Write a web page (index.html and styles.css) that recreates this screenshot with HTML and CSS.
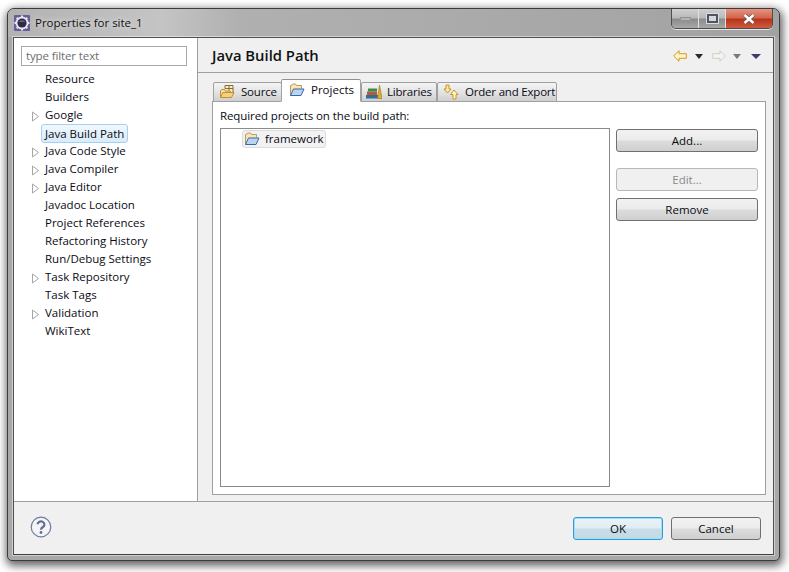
FILE: index.html
```html
<!DOCTYPE html>
<html lang="en">
<head>
<meta charset="utf-8">
<title>Properties for site_1</title>
<link rel="stylesheet" href="styles.css">
</head>
<body>
<svg class="defs" width="0" height="0" aria-hidden="true">
  <symbol id="folder" viewBox="0 0 16 16">
    <path d="M1.500 13.500V3.500h1l1-1.500h3l1 1.500h5v3" fill="#f8e4b4" stroke="#b89a5c"/>
    <path d="M1.500 13.500l3-6.500h10.500l-3 6.500z" fill="#bcd4f0" stroke="#3a68b0"/>
  </symbol>
  <symbol id="tri" viewBox="0 0 9 11">
    <path d="M1.500 1v9l6-4.500z" fill="#fff" stroke="#a6a6a6"/>
  </symbol>
</svg>
<main class="window">
  <header class="titlebar">
    <svg class="app-icon" viewBox="0 0 16 16" aria-hidden="true">
      <rect width="16" height="16" rx="1" fill="#6a5c96"/>
      <circle cx="8" cy="8" r="6.500" fill="#e8e6ee"/>
      <path d="M8 .5v15M.5 8h15M2.700 2.700l10.600 10.600M13.300 2.700L2.700 13.300" stroke="#e8e6ee" stroke-width="2"/>
      <circle cx="8" cy="8" r="4.600" fill="#2e2a4c"/>
      <path d="M4.500 7a3.800 3 0 0 1 7 0z" fill="#6a6690"/>
    </svg>
    <span class="window-title">Properties for site_1</span>
    <div class="controls">
      <div class="ctl ctl-min"><i class="min-glyph"></i></div>
      <div class="ctl ctl-max"><i class="max-glyph"></i></div>
      <div class="ctl ctl-close">
        <svg width="12" height="10" viewBox="0 0 12 10" aria-hidden="true"><path d="M1.500 1l9 8M10.500 1l-9 8" stroke="#5a5a5a" stroke-width="3.800"/><path d="M1.500 1l9 8M10.500 1l-9 8" stroke="#fff" stroke-width="2.400"/></svg>
      </div>
    </div>
  </header>
  <div class="client">
    <div class="body">
      <nav class="sidebar">
        <input class="filter" type="text" placeholder="type filter text">
        <ul class="tree">
          <li class="node">Resource</li>
          <li class="node">Builders</li>
          <li class="node has-kids"><svg class="twisty"><use href="#tri"/></svg>Google</li>
          <li class="node selected"><span class="sel">Java Build Path</span></li>
          <li class="node has-kids"><svg class="twisty"><use href="#tri"/></svg>Java Code Style</li>
          <li class="node has-kids"><svg class="twisty"><use href="#tri"/></svg>Java Compiler</li>
          <li class="node has-kids"><svg class="twisty"><use href="#tri"/></svg>Java Editor</li>
          <li class="node">Javadoc Location</li>
          <li class="node">Project References</li>
          <li class="node">Refactoring History</li>
          <li class="node">Run/Debug Settings</li>
          <li class="node has-kids"><svg class="twisty"><use href="#tri"/></svg>Task Repository</li>
          <li class="node">Task Tags</li>
          <li class="node has-kids"><svg class="twisty"><use href="#tri"/></svg>Validation</li>
          <li class="node">WikiText</li>
        </ul>
      </nav>
      <section class="page">
        <div class="page-head">
          <h1 class="page-title">Java Build Path</h1>
          <div class="history">
            <svg class="arrow" viewBox="0 0 14 12" aria-hidden="true"><path d="M.7 6L6 .7v3h7.300v4.600H6v3z" fill="#fff4c8" stroke="#d29a1e"/></svg>
            <i class="drop drop-a"></i>
            <svg class="arrow arrow-fwd" viewBox="0 0 14 12" aria-hidden="true"><path d="M13.300 6L8 .7v3H.7v4.600H8v3z" fill="#f4f4f0" stroke="#cfcfc8"/></svg>
            <i class="drop drop-b"></i>
            <i class="drop drop-c"></i>
          </div>
        </div>
        <div class="page-body">
          <div class="tabs">
            <div class="tab tab-source">
              <svg class="tab-icon" viewBox="0 0 16 16" aria-hidden="true">
                <path d="M6 4.500V1.500h8v8h-3" fill="#fbeecb" stroke="#8a6a30"/>
                <path d="M10 1.500v8M6 4.500h8" fill="none" stroke="#8a6a30"/>
                <path d="M1.500 13.500V6.500l1-1h3l1 1.500h5v1" fill="#f8dc9c" stroke="#c09030"/>
                <path d="M1.500 13.500l2.500-5h11l-2.500 5z" fill="#f6d184" stroke="#c09030"/>
              </svg>Source</div>
            <div class="tab tab-active">
              <svg class="tab-icon" aria-hidden="true"><use href="#folder"/></svg>Projects</div>
            <div class="tab tab-libs">
              <svg class="tab-icon" viewBox="0 0 16 16" aria-hidden="true">
                <rect x="0" y="11" width="12" height="3.500" fill="#2e6e9a"/>
                <rect x="1" y="7.500" width="10" height="3.500" fill="#b85a3a"/>
                <rect x="2" y="4.500" width="9" height="3" fill="#3c8a4e"/>
                <path d="M11.500 14.500L13.500 1l2.500 13.500z" fill="#e2ae2c" stroke="#9c7414" stroke-width=".6"/>
              </svg>Libraries</div>
            <div class="tab tab-order">
              <svg class="tab-icon" viewBox="0 0 16 16" aria-hidden="true">
                <path d="M3 1h3v4h2L4.500 9 1 5h2z" fill="#fbe9b0" stroke="#c8941e"/>
                <path d="M11 6l4 4.500h-2v4.500h-3v-4.500H7.500z" fill="#fff6d4" stroke="#c8941e"/>
              </svg>Order and Export</div>
          </div>
          <div class="panel">
            <p class="panel-label">Required projects on the build path:</p>
            <div class="panel-row">
              <div class="list">
                <div class="list-item">
                  <svg class="tab-icon" aria-hidden="true"><use href="#folder"/></svg>framework
                </div>
              </div>
              <div class="actions">
                <button class="btn btn-add" type="button">Add...</button>
                <button class="btn btn-disabled" type="button" disabled>Edit...</button>
                <button class="btn btn-remove" type="button">Remove</button>
              </div>
            </div>
          </div>
        </div>
      </section>
    </div>
    <footer class="footer">
      <svg class="help" viewBox="0 0 22 22" aria-hidden="true">
        <circle cx="11" cy="11" r="9.800" fill="#f4f4f6" stroke="#6d7c9c" stroke-width="1.200"/>
        <path d="M7.600 8.300a3.400 3 0 1 1 5.200 2.700c-1.200.8-1.800 1.300-1.800 2.700" fill="none" stroke="#5f6f92" stroke-width="2.200"/>
        <circle cx="11" cy="16.500" r="1.400" fill="#5f6f92"/>
      </svg>
      <div class="footer-actions">
        <button class="btn btn-default" type="button">OK</button>
        <button class="btn btn-cancel" type="button">Cancel</button>
      </div>
    </footer>
  </div>
</main>
</body>
</html>
```
FILE: styles.css
```css
* { box-sizing: border-box; }
html, body { margin: 0; padding: 0; background: #fff; }
body {
  width: 789px;
  height: 572px;
  padding: 8px 9px 11px 7px;
  overflow: hidden;
  font: 11.5px/18px "Open Sans", "Noto Sans", sans-serif;
  color: #0a0a14;
}
.defs { position: absolute; }

.window {
  height: 553px;
  display: flex;
  flex-direction: column;
  padding: 0 5px 5px;
  border: 1px solid #3c3c3c;
  border-radius: 7px 7px 5px 5px;
  background: #a8a8a8;
  box-shadow: 1px 3px 8px 2px rgba(0, 0, 0, .6);
}

.titlebar {
  height: 28px;
  flex: none;
  display: flex;
  align-items: flex-start;
  padding-top: 6px;
  padding-left: 6px;
  margin: 0 -5px;
  background: linear-gradient(90deg, #b2b2b2 0, #c4c4c4 20%, #b0b0b0 30%, #a2a2a2 100%);
  border-radius: 6px 6px 0 0;
}
.app-icon { width: 16px; height: 16px; flex: none; }
.window-title { margin-left: 5px; line-height: 16px; color: #111; text-shadow: 0 0 6px #fff; }

.controls {
  margin-left: auto;
  margin-top: -6px;
  margin-right: 6px;
  display: flex;
  height: 20px;
  border: 1px solid #4e4e4e;
  border-top: 0;
  border-radius: 0 0 5px 5px;
  overflow: hidden;
  box-shadow: 0 1px 0 rgba(255, 255, 255, .7);
}
.ctl {
  display: flex;
  align-items: center;
  justify-content: center;
  border-right: 1px solid #e0e0e0;
  background: linear-gradient(to bottom, #cfcfcf 0, #bababa 45%, #8c8c8c 55%, #a8a8a8 100%);
}
.ctl-min { width: 27px; }
.ctl-max { width: 27px; }
.ctl-close {
  width: 46px;
  border-right: 0;
  background: linear-gradient(to bottom, #e49484 0, #d4664f 45%, #b8351a 55%, #cc5a40 100%);
}
.min-glyph { width: 11px; height: 4px; background: #b0b3b8; border: 1px solid #8f9296; }
.max-glyph { width: 11px; height: 9px; border: 2px solid #4e5666; background: #d6d8dc; box-shadow: 0 0 0 1px #dcdcdc; }

.client {
  flex: 1;
  min-height: 0;
  display: flex;
  flex-direction: column;
  border: 1px solid #505050;
  border-bottom-color: #404040;
  background: #f0f0f0;
  box-shadow: 0 0 0 1px rgba(255, 255, 255, .45);
}

.body { flex: 1; min-height: 0; display: flex; border-bottom: 1px solid #a0a0a0; }

.sidebar {
  width: 184px;
  flex: none;
  padding: 8px 0 0 7px;
  background: #fff;
  border-right: 1px solid #a0a0a0;
}
.filter {
  display: block;
  width: 166px;
  height: 20px;
  padding: 0 4px 2px;
  border: 1px solid #a8a8a8;
  font: inherit;
  letter-spacing: -.12px;
  line-height: 16px;
  outline: 0;
}
.filter::placeholder { color: #6e6e6e; opacity: 1; }

.tree { list-style: none; margin: 4px 0 0; padding: 0 0 0 24px; }
.node { position: relative; height: 18px; line-height: 18px; white-space: nowrap; }
.twisty { position: absolute; left: -14px; top: 5px; width: 9px; height: 11px; }
.sel {
  display: inline-block;
  height: 19px;
  margin-left: -4px;
  padding: 0 3px;
  line-height: 17px;
  border: 1px solid #a8d0ee;
  border-radius: 3px;
  background: linear-gradient(to bottom, #f0f8fe, #d8ecfa);
}

.page { flex: 1; min-width: 0; display: flex; flex-direction: column; }
.page-head {
  height: 35px;
  flex: none;
  display: flex;
  align-items: center;
  padding: 0 12px 0 14px;
  border-bottom: 1px solid #a0a0a0;
}
.page-title { margin: 0; font-size: 14.8px; font-weight: 600; line-height: 20px; color: #111; }
.history { margin-left: auto; margin-top: 2px; display: flex; align-items: center; }
.arrow { width: 14px; height: 12px; display: block; }
.arrow-fwd { margin-left: 9px; }
.drop { width: 0; height: 0; border: 4px solid transparent; border-bottom: 0; border-top-width: 5px; }
.drop-a { margin-left: 8px; border-top-color: #2a2a2a; }
.drop-b { margin-left: 7px; border-top-color: #7a7a7a; }
.drop-c { margin-left: 10px; border-left-width: 5px; border-right-width: 5px; border-top-color: #3c3a70; }

.page-body {
  flex: 1;
  min-height: 0;
  display: flex;
  flex-direction: column;
  padding: 7px 7px 6px 14px;
}

.tabs { display: flex; flex: none; align-items: flex-end; height: 22px; margin-bottom: -1px; padding-left: 1px; position: relative; z-index: 1; }
.tab {
  display: flex;
  align-items: center;
  height: 20px;
  padding-left: 5px;
  border: 1px solid #a0a0a0;
  border-radius: 2px 2px 0 0;
  background: linear-gradient(to bottom, #f4f4f4 0, #e4e4e4 50%, #cfcfcf 100%);
  white-space: nowrap;
  letter-spacing: -.2px;
}
.tab-source { width: 69px; padding-left: 5px; }
.tab-libs { width: 76px; padding-left: 4px; }
.tab-libs .tab-icon { margin-right: 5px; }
.tab-order { width: 120px; }
.tab-active {
  width: 80px;
  height: 23px;
  padding-left: 7px;
  padding-bottom: 2px;
  margin-left: -1px;
  background: #fff;
  border-bottom-color: #fff;
  border-top-color: #909090;
  letter-spacing: 0;
}
.tab-icon { width: 16px; height: 16px; flex: none; margin-right: 6px; }

.panel {
  flex: 1;
  min-height: 0;
  display: flex;
  flex-direction: column;
  padding: 5px 7px 7px;
  border: 1px solid #a0a0a0;
  background: #fff;
}
.panel-label { margin: 0 0 3px; line-height: 18px; flex: none; letter-spacing: -.1px; }
.panel-row { flex: 1; min-height: 0; display: flex; }
.list {
  width: 390px;
  flex: none;
  padding-top: 1px;
  padding-left: 21px;
  border: 1px solid #8a8a8a;
}
.list-item {
  display: inline-flex;
  align-items: center;
  height: 18px;
  padding: 0 1px;
  border: 1px solid #dcdcdc;
  border-radius: 3px;
  background: #f2f2f2;
}
.list-item .tab-icon { margin-right: 5px; }

.actions { display: flex; flex-direction: column; margin-left: 6px; padding-top: 1px; width: 142px; }
.btn {
  display: block;
  padding: 0;
  height: 23px;
  font: inherit;
  color: inherit;
  text-align: center;
  border: 1px solid #707070;
  border-radius: 3px;
  background: linear-gradient(to bottom, #f2f2f2 0, #ebebeb 48%, #dcdcdc 52%, #cfcfcf 100%);
}
.btn-disabled {
  margin-top: 16px;
  color: #8a8a8a;
  border-color: #b8b8b8;
  background: #f0f0f0;
}
.btn-remove { margin-top: 7px; }

.footer {
  height: 52px;
  flex: none;
  display: flex;
  align-items: flex-start;
  padding: 15px 12px 0 16px;
}
.help { width: 22px; height: 22px; flex: none; margin-top: -1px; }
.footer-actions { margin-left: auto; display: flex; gap: 8px; }
.footer .btn { width: 90px; }
.btn-default {
  border-color: #2a9ed8;
  box-shadow: inset 0 0 0 1px #a6dcf4;
  background: linear-gradient(to bottom, #eaf4f8 0, #e0edf2 48%, #c8dde6 52%, #c4dae4 100%);
}
```
